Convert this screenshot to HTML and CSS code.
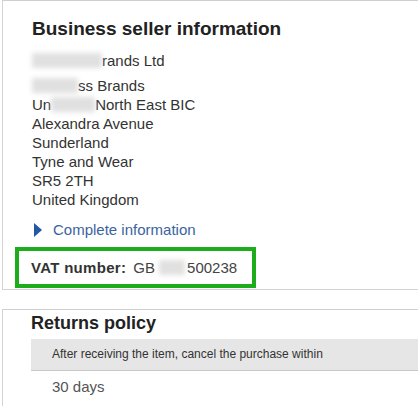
FILE: index.html
```html
<!DOCTYPE html>
<html>
<head>
<meta charset="utf-8">
<link rel="stylesheet" href="styles.css">
</head>
<body>
<section class="card seller">
  <h2 class="title">Business seller information</h2>
  <div class="line name"><span class="blur w70"></span>rands Ltd</div>
  <div class="address">
    <div class="line"><span class="blur w48"></span>ss Brands</div>
    <div class="line">Un<span class="blur w44"></span>North East BIC</div>
    <div class="line">Alexandra Avenue</div>
    <div class="line">Sunderland</div>
    <div class="line">Tyne and Wear</div>
    <div class="line">SR5 2TH</div>
    <div class="line">United Kingdom</div>
  </div>
  <div class="more">
    <svg class="tri" width="8" height="14" viewBox="0 0 8 14"><path d="M0 0 L8 7 L0 14 Z" fill="#2356a5"/></svg>
    <span class="link">Complete information</span>
  </div>
  <div class="vat">
    <span class="vat-label">VAT number:</span>
    <span class="vat-value">GB <span class="blur w22"></span>500238</span>
  </div>
</section>
<section class="card returns">
  <h2 class="title small">Returns policy</h2>
  <div class="band">After receiving the item, cancel the purchase within</div>
  <div class="days">30 days</div>
</section>
</body>
</html>
```
FILE: styles.css
```css
html, body {
  margin: 0;
  padding: 0;
  background: #fff;
}
body {
  font-family: "Liberation Sans", Arial, sans-serif;
  color: #333;
  width: 418px;
  height: 407px;
  overflow: hidden;
}
.card {
  margin-left: 2px;
  border-left: 1px solid #d4d4d4;
  border-top: 1px solid #cfcfcf;
}
.seller {
  border-bottom: 1px solid #d4d4d4;
  padding: 17px 0 1px 29px;
}
.title {
  margin: 0;
  font-size: 19px;
  line-height: 22px;
  font-weight: bold;
  color: #222;
}
.title.small {
  font-size: 18px;
}
.line {
  font-size: 15px;
  line-height: 19px;
}
.name {
  margin-top: 11px;
}
.address {
  margin-top: 6px;
}
.blur {
  display: inline-block;
  height: 15px;
  vertical-align: -2px;
  background: #d6d6d6;
  filter: blur(2.5px);
  opacity: 0.75;
}
.w70 { width: 70px; }
.w48 { width: 46px; }
.w44 { width: 44px; }
.w22 { width: 26px; margin-right: 2px; }
.more {
  margin-top: 11px;
  display: flex;
  align-items: center;
  height: 19px;
  padding-left: 2px;
}
.tri {
  display: block;
}
.link {
  margin-left: 11px;
  font-size: 15px;
  color: #3a64a0;
}
.vat {
  margin: 8px 0 0 -17px;
  display: inline-flex;
  align-items: center;
  border: 4px solid #1cac1c;
  height: 33px;
  padding: 0 15px 0 12px;
  font-size: 15px;
}
.vat-label {
  font-weight: bold;
  color: #333;
  letter-spacing: 0.3px;
}
.vat-value {
  margin-left: 7px;
  color: #444;
}
.returns {
  margin-top: 19px;
  padding: 2px 0 0 28px;
  height: 94px;
}
.band {
  margin-top: 5px;
  background: #e6e6e6;
  border-bottom: 1px solid #c8c8c8;
  height: 31px;
  line-height: 31px;
  padding-left: 21px;
  font-size: 12px;
  color: #333;
}
.days {
  padding-left: 21px;
  margin-top: 6px;
  font-size: 15px;
  line-height: 20px;
  color: #555;
}
```
